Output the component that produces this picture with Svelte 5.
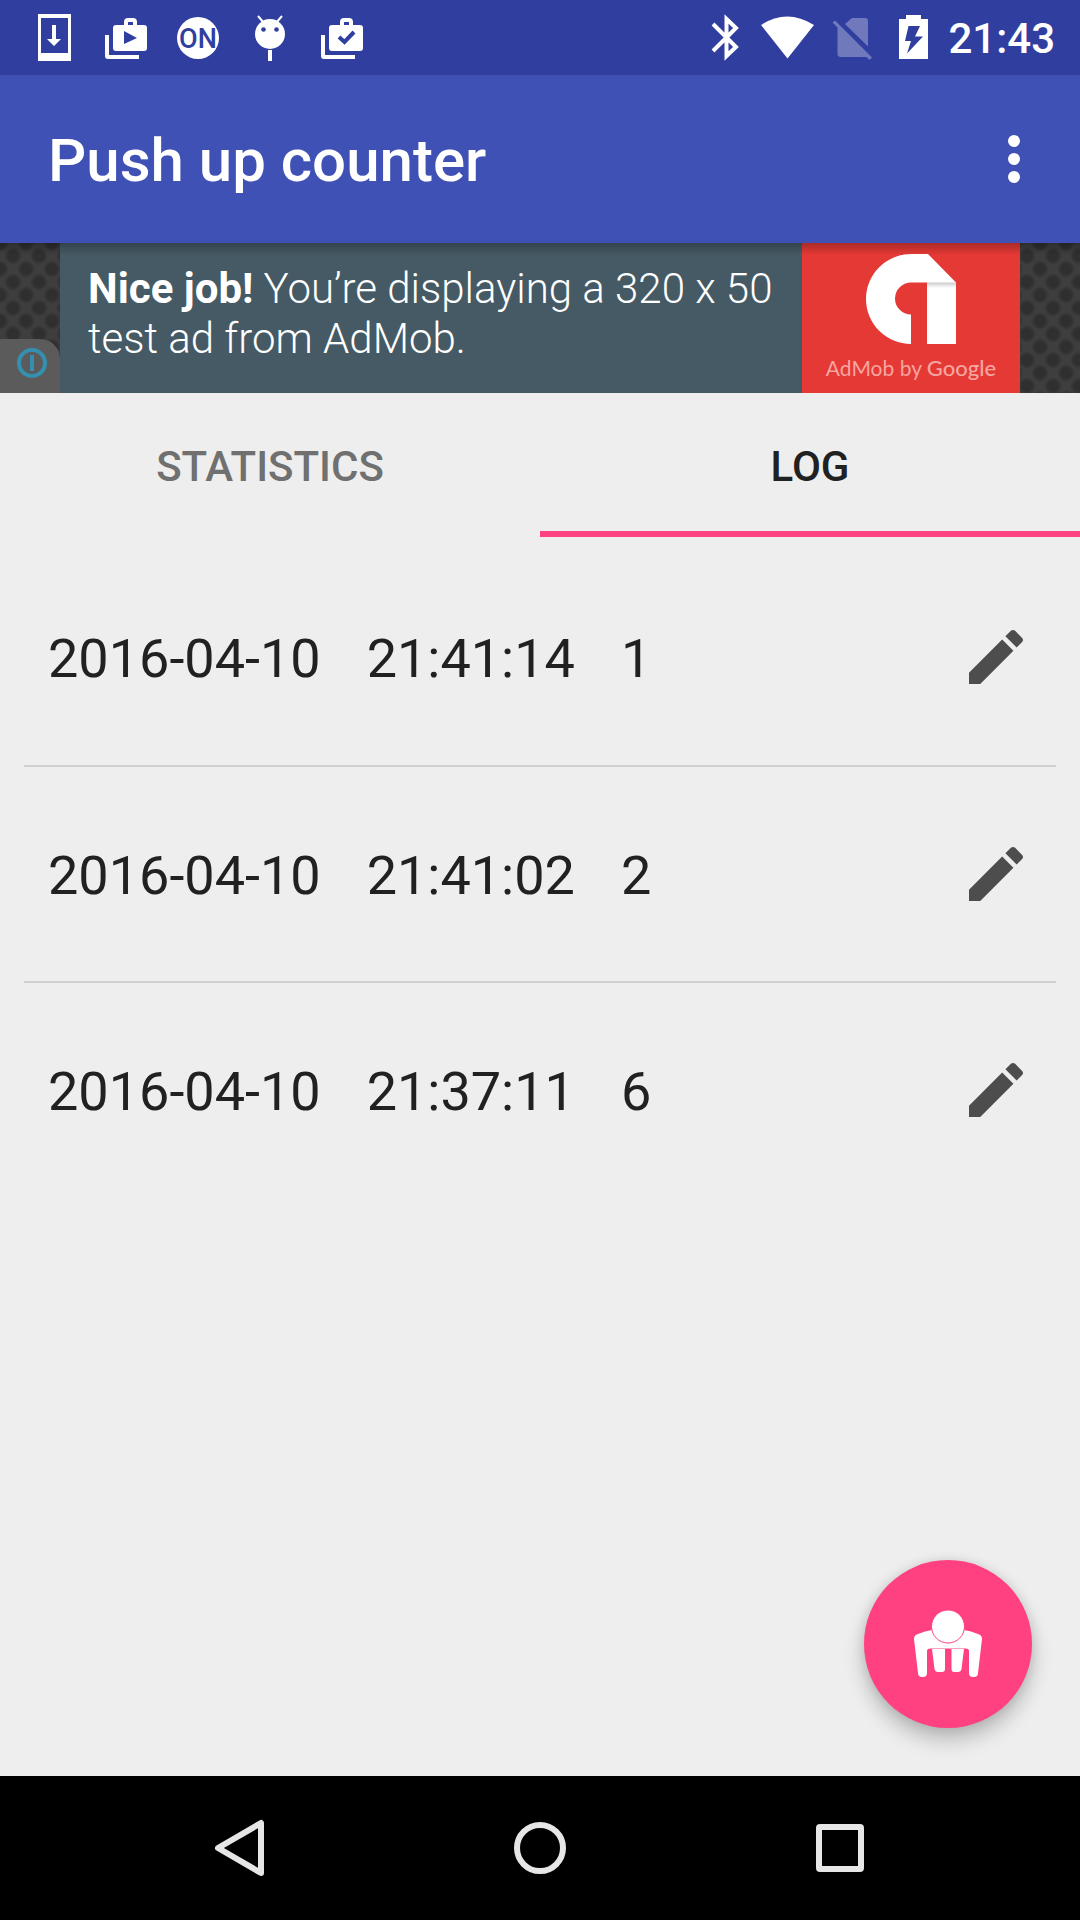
<script>
    let tab = 'log';

    const tabs = [
        { id: 'statistics', label: 'Statistics' },
        { id: 'log', label: 'Log' }
    ];

    const entries = [
        { date: '2016-04-10', time: '21:41:14', count: 1 },
        { date: '2016-04-10', time: '21:41:02', count: 2 },
        { date: '2016-04-10', time: '21:37:11', count: 6 }
    ];
</script>

<div class="screen">
    <div class="status">
        <div class="icons">
            <svg width="72" height="75" viewBox="0 0 72 75">
                <path fill-rule="evenodd" d="M20 14H53V61H20ZM23 18V53H50V18ZM34 25H38V39H43L36 46L29 39H34Z" />
            </svg>
            <svg width="72" height="75" viewBox="0 0 72 75">
                <path d="M15 35H19V55H49V59H18Q15 59 15 56Z" />
                <path fill-rule="evenodd" d="M34 25V22Q34 18 38 18H43Q47 18 47 22V25H54Q57 25 57 28V48Q57 51 54 51H26Q23 51 23 48V28Q23 25 26 25ZM38 25H43V22H38ZM34 31V44L47 38Z" />
            </svg>
            <svg width="72" height="75" viewBox="0 0 72 75">
                <circle cx="36" cy="38" r="21" />
                <text x="36" y="48" text-anchor="middle">ON</text>
            </svg>
            <svg width="72" height="75" viewBox="0 0 72 75">
                <circle cx="36" cy="34" r="15" />
                <path class="line" d="M24 16L30 23M48 16L42 23" stroke-width="2" />
                <circle class="hole" cx="29.5" cy="29.5" r="2.3" />
                <circle class="hole" cx="42.5" cy="29.5" r="2.3" />
                <path d="M34 50H38V61H34Z" />
            </svg>
            <svg width="72" height="75" viewBox="0 0 72 75">
                <path d="M15 35H19V55H49V59H18Q15 59 15 56Z" />
                <path fill-rule="evenodd" d="M34 25V22Q34 18 38 18H43Q47 18 47 22V25H54Q57 25 57 28V48Q57 51 54 51H26Q23 51 23 48V28Q23 25 26 25ZM38 25H43V22H38Z" />
                <path class="tick" d="M33 37L38.5 42L48 32" />
            </svg>
        </div>
        <div class="icons">
            <svg width="44" height="75" viewBox="0 0 44 75">
                <path class="line" d="M5 24L28 47L18.5 56V19L28 28L5 51" stroke-width="4" />
            </svg>
            <svg width="72" height="75" viewBox="0 0 72 75">
                <path d="M9 25Q35 8 62 25L35.5 58.5Z" />
            </svg>
            <svg class="dim" width="60" height="75" viewBox="0 0 60 75">
                <path d="M11 20.5L48 57.5L45.5 60L42.500 57H17Q13.500 57 13.500 54V27.500L8.500 22.500Z" />
                <path d="M21 24L28 18H41Q44 18 44 21V46.500Z" />
            </svg>
            <svg width="60" height="75" viewBox="0 0 60 75">
                <path fill-rule="evenodd" d="M22 15H37V19H44V59H15V19H22ZM24.500 26L21 41H27L23 53.500L39 36.500H31L36 26Z" />
            </svg>
            <time>21:43</time>
        </div>
    </div>

    <header>
        <h1>Push up counter</h1>
        <button class="icon" type="button" aria-label="More options">
            <svg width="72" height="72" viewBox="0 0 24 24">
                <circle cx="12" cy="6" r="2" />
                <circle cx="12" cy="12" r="2" />
                <circle cx="12" cy="18" r="2" />
            </svg>
        </button>
    </header>

    <div class="ad">
        <button class="info" type="button" aria-label="About this ad">
            <svg width="32" height="32" viewBox="0 0 32 32">
                <circle cx="16" cy="16" r="13" />
                <path d="M16 8V24" />
            </svg>
        </button>
        <a class="banner" href="#ad">
            <p><b>Nice job!</b> You’re displaying a 320 x 50 test ad from AdMob.</p>
            <span class="brand">
                <svg width="90" height="90" viewBox="0 0 90 90">
                    <defs>
                        <linearGradient id="fold" x1="0" y1="0" x2="0" y2="1">
                            <stop offset="0" stop-color="#ccc" />
                            <stop offset="1" stop-color="#fff" />
                        </linearGradient>
                    </defs>
                    <path fill="#fff" d="M45 90A45 45 0 0 1 45 0H62L90 28.500V90H61V28.500H45A16 16 0 0 0 45 60.500Z" />
                    <path fill="url(#fold)" d="M61 28.500H90V34H61Z" />
                </svg>
                <span class="by">AdMob by <b>Google</b></span>
            </span>
        </a>
    </div>

    <div class="tabs" role="tablist">
        {#each tabs as t}
            <button type="button" role="tab" aria-selected={tab === t.id} class:active={tab === t.id} on:click={() => tab = t.id}>{t.label}</button>
        {/each}
    </div>

    <main>
        {#if tab === 'log'}
            <ul>
                {#each entries as entry}
                    <li>
                        <span>{entry.date}</span>
                        <span>{entry.time}</span>
                        <span>{entry.count}</span>
                        <button class="icon edit" type="button" aria-label="Edit entry">
                            <svg width="72" height="72" viewBox="0 0 24 24">
                                <path d="M3 17.250V21h3.750L17.810 9.940l-3.750-3.750L3 17.250zM20.710 7.040c.39-.39.39-1.020 0-1.410l-2.340-2.340c-.39-.39-1.020-.39-1.410 0l-1.830 1.830 3.750 3.750 1.830-1.830z" />
                            </svg>
                        </button>
                    </li>
                {/each}
            </ul>
        {/if}

        <button class="fab" type="button" aria-label="Start push ups">
            <svg width="68" height="68" viewBox="0 0 68 68">
                <path d="M0 29Q0 25 4 24Q11 21 18 20H50Q57 21 64 24Q68 25 68 29L64 63Q64 67 60 67H59Q55 67 55 63V41Q55 38.500 52 38.500H16Q13 38.500 13 41V63Q13 67 9 67H8Q4 67 4 63Z" />
                <path d="M18 39H31V59Q31 62 28 62H24Q21 62 20.500 59ZM37.500 39H50L47.500 59Q47 62 44 62H40Q37.500 62 37.500 59Z" />
                <circle cx="34" cy="16.500" r="16.500" />
            </svg>
        </button>
    </main>

    <nav>
        <button type="button" aria-label="Back">
            <svg width="60" height="60" viewBox="0 0 60 60">
                <path d="M8 30L51 5V55Z" />
            </svg>
        </button>
        <button type="button" aria-label="Home">
            <svg width="60" height="60" viewBox="0 0 60 60">
                <circle cx="30" cy="30" r="23" />
            </svg>
        </button>
        <button type="button" aria-label="Recent apps">
            <svg width="60" height="60" viewBox="0 0 60 60">
                <rect x="9" y="9" width="42" height="42" rx="1" />
            </svg>
        </button>
    </nav>
</div>

<style>
    :global(body){
        background-color: #eee;
    }

    .screen{
        display: flex;
        flex-direction: column;
        min-height: 100vh;
        background-color: #eee;
        color: #212121;
        font-family: Roboto, "Noto Sans", sans-serif;
    }

    svg{
        display: block;
        flex: none;
    }

    button{
        border: none;
        padding: 0;
        background: transparent;
        font-family: inherit;
        cursor: pointer;
    }

    .status{
        display: flex;
        justify-content: space-between;
        padding: 0 25px 0 18px;
        background-color: #303f9f;
        color: white;
    }

    .icons{
        display: flex;
        align-items: center;
        fill: white;
    }

    .icons text{
        fill: #303f9f;
        font-size: 27px;
        font-weight: 500;
    }

    .icons .hole{
        fill: #303f9f;
    }

    .icons .line{
        fill: none;
        stroke: white;
    }

    .icons .tick{
        fill: none;
        stroke: #303f9f;
        stroke-width: 4;
    }

    .icons .dim{
        opacity: .3;
    }

    time{
        font-size: 42px;
        font-weight: 500;
        line-height: 48px;
        padding: 3px 0 0 4px;
    }

    header{
        display: flex;
        align-items: center;
        justify-content: space-between;
        height: 168px;
        padding: 0 30px 0 48px;
        background-color: #3f51b5;
        color: white;
    }

    h1{
        margin: 0;
        padding-top: 3px;
        font-size: 60px;
        font-weight: 500;
    }

    .icon{
        fill: currentColor;
        color: inherit;
    }

    .ad{
        position: relative;
        display: flex;
        height: 150px;
        padding: 0 60px;
        background-color: #3e3e3e;
        background-image:
            radial-gradient(circle, #2f2f2f 5px, transparent 9px),
            radial-gradient(circle, #2f2f2f 5px, transparent 9px);
        background-size: 26px 26px;
        background-position: 0 0, 13px 13px;
    }

    /* shadow of the toolbar over the ad */
    .ad::after{
        position: absolute;
        content: '';
        top: 0;
        left: 0;
        right: 0;
        height: 12px;
        background: linear-gradient(rgba(0, 0, 0, .25), transparent);
        pointer-events: none;
    }

    .info{
        position: absolute;
        left: 0;
        bottom: 0;
        display: flex;
        align-items: center;
        justify-content: flex-end;
        width: 60px;
        height: 54px;
        padding: 0 12px 6px 0;
        border-top-right-radius: 20px;
        background-color: #5b5b5b;
    }

    .info svg{
        fill: none;
        stroke: #3390b0;
        stroke-width: 4;
    }

    .banner{
        display: flex;
        flex: 1;
        background-color: #455a64;
        color: white;
        text-decoration: none;
    }

    .banner p{
        flex: 1;
        margin: 0;
        padding: 21px 8px 0 28px;
        font-size: 42px;
        font-weight: 300;
        line-height: 50px;
    }

    .banner p b{
        font-weight: 700;
    }

    .brand{
        display: flex;
        flex-direction: column;
        align-items: center;
        width: 218px;
        padding-top: 11px;
        background-color: #e53935;
    }

    .by{
        margin-top: 10px;
        color: #f6a5a0;
        font-family: Lato, sans-serif;
        font-size: 21px;
        line-height: 28px;
        white-space: nowrap;
    }

    .by b{
        font-size: 22px;
        font-weight: 500;
    }

    .tabs{
        display: flex;
        height: 144px;
    }

    .tabs button{
        flex: 1;
        border-top: 6px solid transparent;
        border-bottom: 6px solid transparent;
        padding-top: 3px;
        color: #707070;
        font-size: 42px;
        font-weight: 500;
        text-transform: uppercase;
    }

    .tabs .active{
        border-bottom-color: #ff4081;
        color: #212121;
    }

    main{
        position: relative;
        flex: 1;
        padding: 12px 24px;
    }

    ul{
        list-style: none;
        margin: 0;
        padding: 0;
    }

    li{
        display: flex;
        align-items: center;
        gap: 46px;
        box-sizing: border-box;
        height: 216px;
        padding: 0 24px;
        font-size: 54px;
    }

    li span{
        padding-top: 3px;
    }

    li + li{
        border-top: 2px solid #d0d0d0;
    }

    .edit{
        margin-left: auto;
        color: #4d4d4d;
    }

    .fab{
        position: absolute;
        right: 48px;
        bottom: 48px;
        display: flex;
        align-items: center;
        justify-content: center;
        width: 168px;
        height: 168px;
        border-radius: 50%;
        background-color: #ff4081;
        box-shadow: 0 12px 20px rgba(0, 0, 0, .22), 0 0 12px rgba(0, 0, 0, .1);
    }

    .fab svg{
        fill: white;
        overflow: visible;
    }

    .fab circle{
        stroke: #ff4081;
        stroke-width: 1;
    }

    nav{
        display: flex;
        height: 144px;
        padding: 0 90px;
        background-color: black;
    }

    nav button{
        display: flex;
        flex: 1;
        align-items: center;
        justify-content: center;
    }

    nav svg{
        fill: none;
        stroke: #e6e6e6;
        stroke-width: 6;
        stroke-linejoin: round;
    }
</style>
